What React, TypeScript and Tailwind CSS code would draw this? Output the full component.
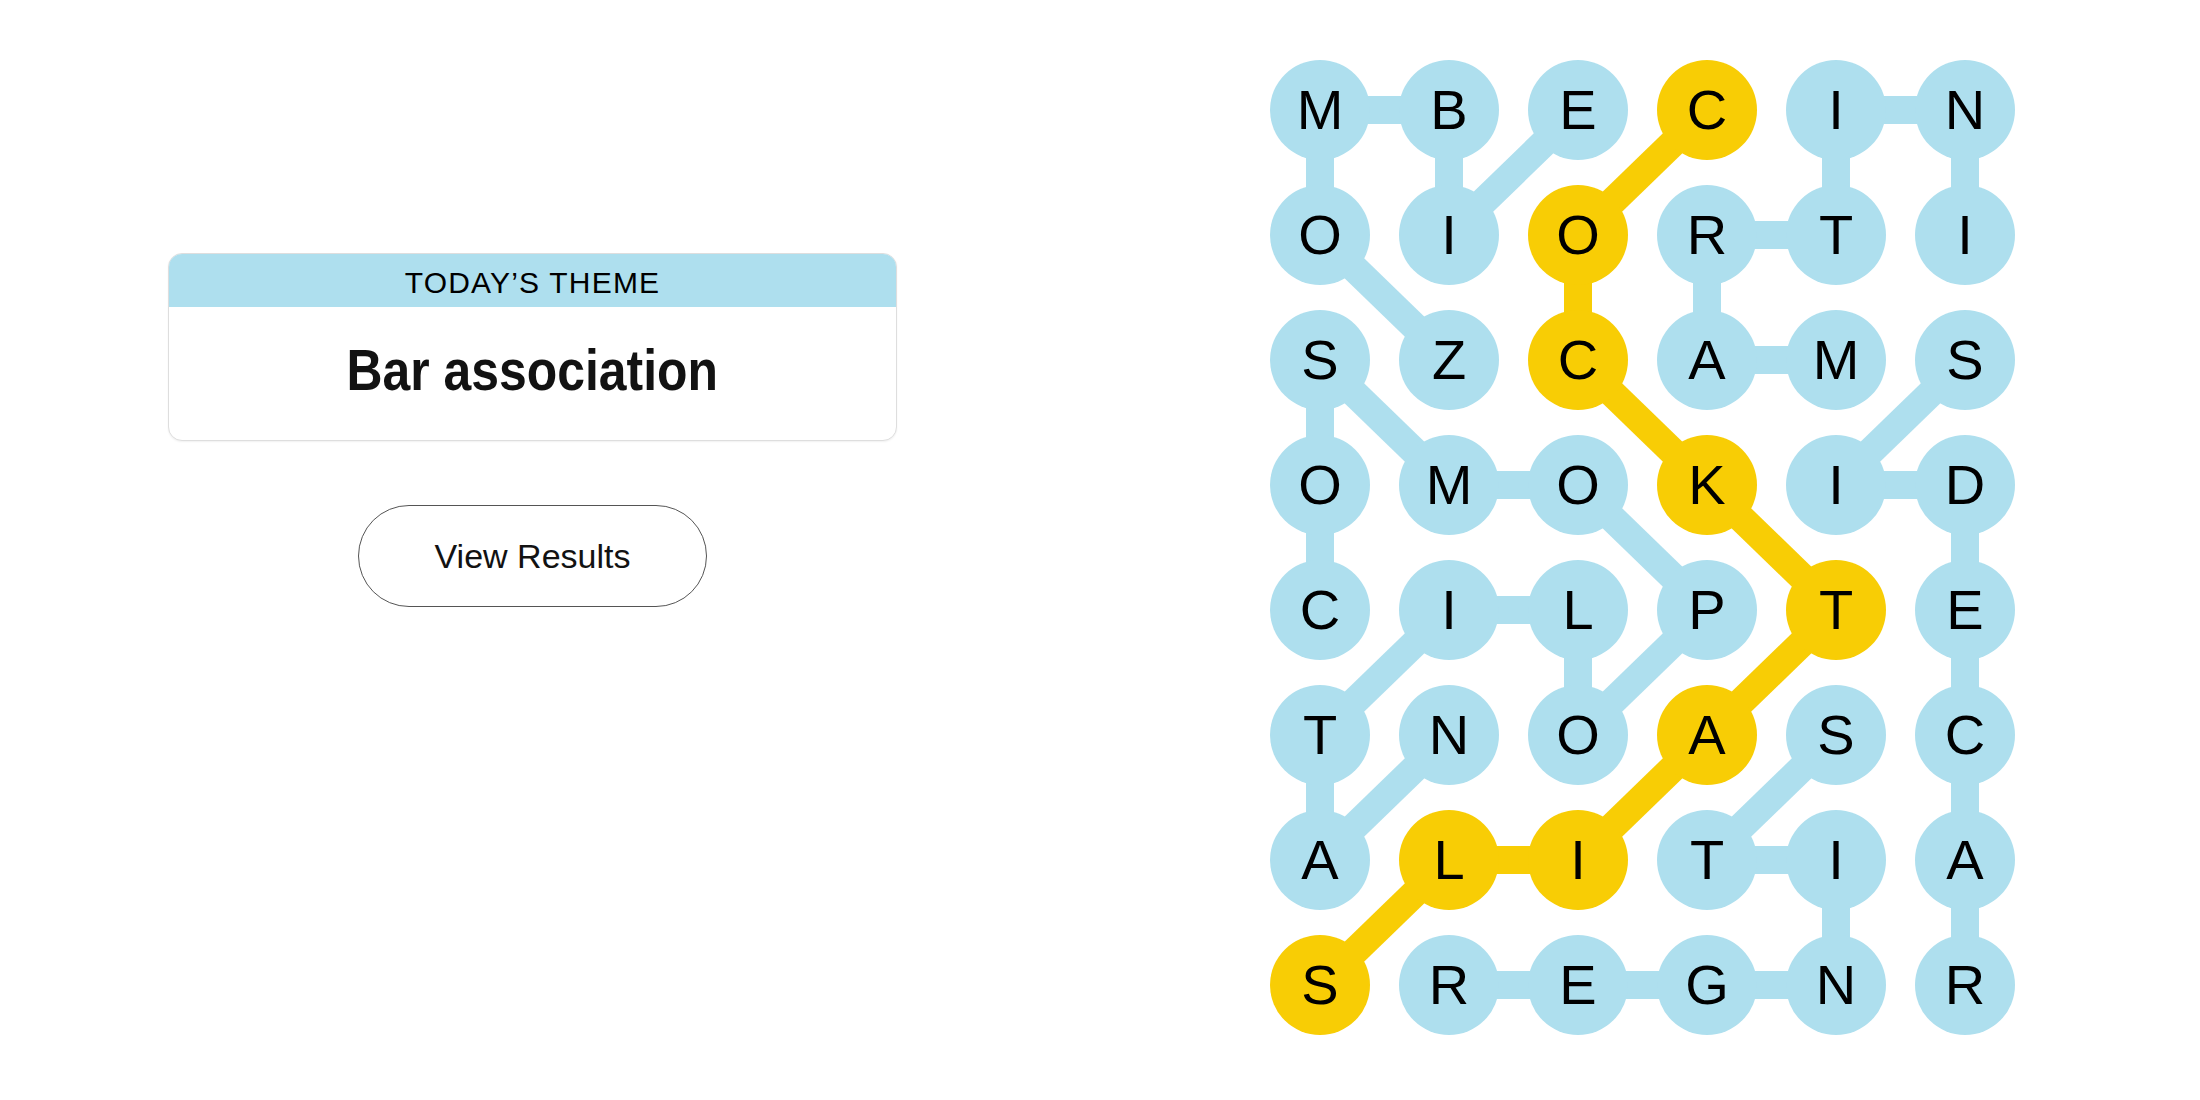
const BLUE = "#aedfee";
const YELLOW = "#f8cd05";

const GRID = [
  "MBECIN",
  "OIORTI",
  "SZCAMS",
  "OMOKID",
  "CILPTE",
  "TNOASC",
  "ALITIA",
  "SREGNR",
];

// words found, as chains of [row, col]
const WORDS: { cells: [number, number][]; spangram?: boolean }[] = [
  { cells: [[2, 1], [1, 0], [0, 0], [0, 1], [1, 1], [0, 2]] }, // ZOMBIE
  { cells: [[2, 4], [2, 3], [1, 3], [1, 4], [0, 4], [0, 5], [1, 5]] }, // MARTINI
  { cells: [[2, 5], [3, 4], [3, 5], [4, 5], [5, 5], [6, 5], [7, 5]] }, // SIDECAR
  { cells: [[5, 4], [6, 3], [6, 4], [7, 4], [7, 3], [7, 2], [7, 1]] }, // STINGER
  {
    cells: [[4, 0], [3, 0], [2, 0], [3, 1], [3, 2], [4, 3], [5, 2], [4, 2], [4, 1], [5, 0], [6, 0], [5, 1]],
  }, // COSMOPOLITAN
  {
    cells: [[0, 3], [1, 2], [2, 2], [3, 3], [4, 4], [5, 3], [6, 2], [6, 1], [7, 0]],
    spangram: true,
  }, // COCKTAILS
];

const COL_STEP = 129;
const ROW_STEP = 125;
const cx = (c: number) => 50 + c * COL_STEP;
const cy = (r: number) => 50 + r * ROW_STEP;

const spangramCells = new Set(
  WORDS.filter((w) => w.spangram).flatMap((w) => w.cells.map(([r, c]) => `${r}-${c}`))
);

function Board() {
  return (
    <div className="relative w-[745px] h-[975px]">
      <svg className="absolute inset-0" width={745} height={975} aria-hidden>
        {WORDS.map((w, i) =>
          w.cells.slice(1).map(([r, c], j) => {
            const [pr, pc] = w.cells[j];
            return (
              <line
                key={`${i}-${j}`}
                x1={cx(pc)}
                y1={cy(pr)}
                x2={cx(c)}
                y2={cy(r)}
                stroke={w.spangram ? YELLOW : BLUE}
                strokeWidth={28}
              />
            );
          })
        )}
      </svg>
      <div className="relative grid grid-cols-6 gap-x-[29px] gap-y-[25px]">
        {GRID.flatMap((row, r) =>
          row.split("").map((ch, c) => (
            <div
              key={`${r}-${c}`}
              className={
                spangramCells.has(`${r}-${c}`)
                  ? "w-[100px] h-[100px] rounded-full bg-[#f8cd05] flex items-center justify-center text-[56px] text-black"
                  : "w-[100px] h-[100px] rounded-full bg-[#aedfee] flex items-center justify-center text-[56px] text-black"
              }
            >
              {ch}
            </div>
          ))
        )}
      </div>
    </div>
  );
}

export default function App() {
  return (
    <div className="min-h-screen bg-white flex font-['Liberation_Sans',Arial,sans-serif] text-[#121212]">
      <div className="w-[897px] shrink-0 pl-[168px] pt-[253px]">
        <div className="w-[729px] rounded-[14px] border border-[#dedede] overflow-hidden bg-white shadow-[0_1px_2px_rgba(0,0,0,0.06)]">
          <div className="h-[53px] bg-[#aedfee] flex items-center justify-center pt-[5px]">
            <span className="text-[30px] tracking-[1.2px] leading-none text-black">TODAY’S THEME</span>
          </div>
          <div className="h-[133px] flex items-center justify-center pb-[6px]">
            <span className="inline-block text-[57px] font-bold leading-none scale-x-[0.875]">
              Bar association
            </span>
          </div>
        </div>
        <div className="flex justify-center mt-[64px]">
          <button
            type="button"
            className="w-[349px] h-[102px] rounded-full border-[1.5px] border-[#555] bg-white text-[34px] text-[#121212] flex items-center justify-center"
          >
            View Results
          </button>
        </div>
      </div>
      <div className="ml-[373px] pt-[60px]">
        <Board />
      </div>
    </div>
  );
}
